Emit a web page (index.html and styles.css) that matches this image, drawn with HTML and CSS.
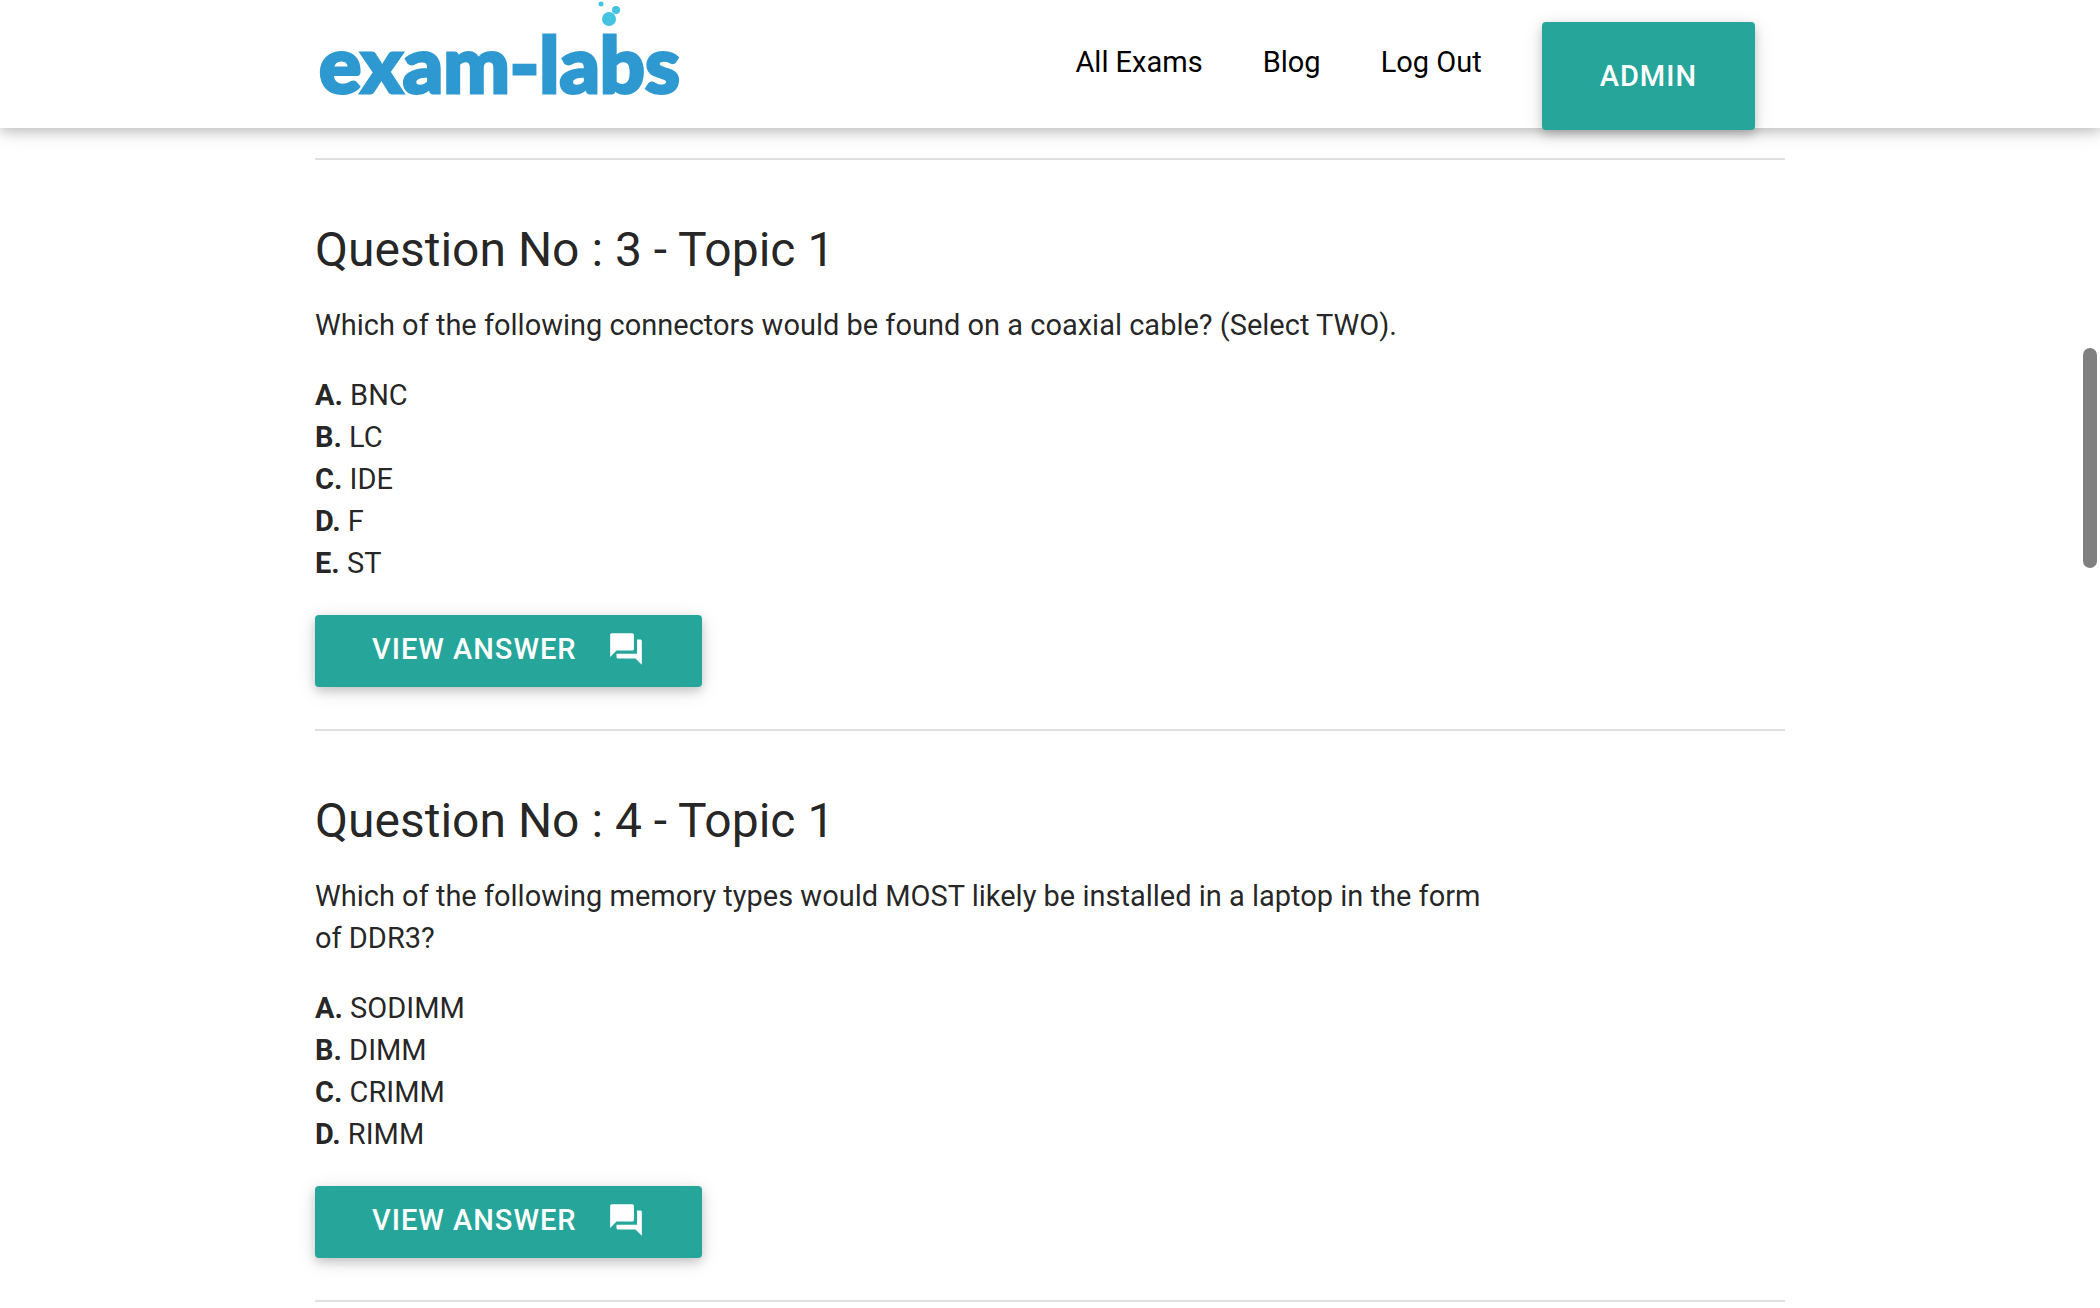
FILE: index.html
```html
<!DOCTYPE html>
<html lang="en">
<head>
  <meta charset="UTF-8">
  <meta name="viewport" content="width=device-width, initial-scale=1.0">
  <title>Exam-Labs - Questions</title>
  <link rel="stylesheet" href="styles.css">
</head>
<body>

  <header>
    <div class="container nav">
      <a href="#" class="logo">
        <svg width="380" height="128" viewBox="0 0 380 128" role="img" aria-label="exam-labs">
          <text x="4" y="93" class="logo-text">exam-labs</text>
          <circle cx="294" cy="19" r="7" class="bubble" />
          <circle cx="301" cy="10" r="4" class="bubble" />
          <circle cx="286" cy="4" r="2.5" class="bubble" />
        </svg>
      </a>
      <nav>
        <a href="#">All Exams</a>
        <a href="#">Blog</a>
        <a href="#">Log Out</a>
        <a href="#" class="btn btn-admin">Admin</a>
      </nav>
    </div>
  </header>

  <main class="container">
    <hr>

    <section class="question">
      <h2>Question No : 3 - Topic 1</h2>
      <p>Which of the following connectors would be found on a coaxial cable? (Select TWO).</p>
      <ul>
        <li><b>A.</b> BNC</li>
        <li><b>B.</b> LC</li>
        <li><b>C.</b> IDE</li>
        <li><b>D.</b> F</li>
        <li><b>E.</b> ST</li>
      </ul>
      <button type="button" class="btn btn-answer">
        View Answer
        <svg class="icon" viewBox="0 0 24 24" aria-hidden="true"><path d="M21 6h-2v9H6v2c0 .55.45 1 1 1h11l4 4V7c0-.55-.45-1-1-1zm-4 6V3c0-.55-.45-1-1-1H3c-.55 0-1 .45-1 1v14l4-4h10c.55 0 1-.45 1-1z" /></svg>
      </button>
    </section>

    <hr>

    <section class="question">
      <h2>Question No : 4 - Topic 1</h2>
      <p>Which of the following memory types would MOST likely be installed in a laptop in the form of DDR3?</p>
      <ul>
        <li><b>A.</b> SODIMM</li>
        <li><b>B.</b> DIMM</li>
        <li><b>C.</b> CRIMM</li>
        <li><b>D.</b> RIMM</li>
      </ul>
      <button type="button" class="btn btn-answer">
        View Answer
        <svg class="icon" viewBox="0 0 24 24" aria-hidden="true"><path d="M21 6h-2v9H6v2c0 .55.45 1 1 1h11l4 4V7c0-.55-.45-1-1-1zm-4 6V3c0-.55-.45-1-1-1H3c-.55 0-1 .45-1 1v14l4-4h10c.55 0 1-.45 1-1z" /></svg>
      </button>
    </section>

    <hr>
  </main>

  <div class="scroll-thumb"></div>

</body>
</html>
```
FILE: styles.css
```css
body {
  font-family: Roboto, sans-serif;
  font-size: 29px;
  line-height: 42px;
  margin: 0;
  background-color: #fff;
  color: rgba(0, 0, 0, 0.87);
}

.container {
  width: 70%;
  margin: 0 auto;
}

header {
  height: 128px;
  background-color: #fff;
  box-shadow: 0 4px 10px 0 rgba(0, 0, 0, 0.16), 0 4px 20px 0 rgba(0, 0, 0, 0.12);
}

.nav {
  display: flex;
  justify-content: space-between;
}

.logo {
  height: 128px;
}

.logo-text {
  font-family: Lato, sans-serif;
  font-size: 79px;
  font-weight: 900;
  fill: #2e99d0;
  stroke: #2e99d0;
  stroke-width: 3px;
}

.bubble {
  fill: #45c3e3;
}

nav {
  display: flex;
  align-items: flex-start;
}

nav a {
  padding: 0 30px;
  line-height: 124px;
  color: #000;
  text-decoration: none;
}

.btn {
  border: none;
  border-radius: 4px;
  background-color: #26a69a;
  color: #fff;
  font-family: inherit;
  font-size: 29px;
  font-weight: 500;
  letter-spacing: 1px;
  text-transform: uppercase;
  cursor: pointer;
  box-shadow: 0 4px 10px 0 rgba(0, 0, 0, 0.16), 0 4px 20px 0 rgba(0, 0, 0, 0.12);
}

.btn-admin {
  margin: 22px 30px 0;
  padding: 0 58px;
  line-height: 108px;
}

.btn-answer {
  display: flex;
  align-items: center;
  gap: 30px;
  height: 72px;
  padding: 0 57px 4px;
}

.icon {
  width: 38px;
  height: 38px;
  fill: #fff;
}

main {
  padding-top: 30px;
}

hr {
  height: 2px;
  margin: 0;
  border: none;
  background-color: #e0e0e0;
}

.question {
  padding: 63px 0 42px;
}

h2 {
  margin: 0 0 28px;
  font-size: 48px;
  font-weight: 400;
  line-height: 53px;
}

p {
  width: 80%;
  margin: 0 0 28px;
}

ul {
  margin: 0 0 31px;
  padding: 0;
  list-style: none;
}

b {
  font-weight: 700;
}

/* overlay scrollbar */
.scroll-thumb {
  position: fixed;
  top: 348px;
  right: 3px;
  width: 14px;
  height: 220px;
  border-radius: 7px;
  background-color: #808080;
}
```
